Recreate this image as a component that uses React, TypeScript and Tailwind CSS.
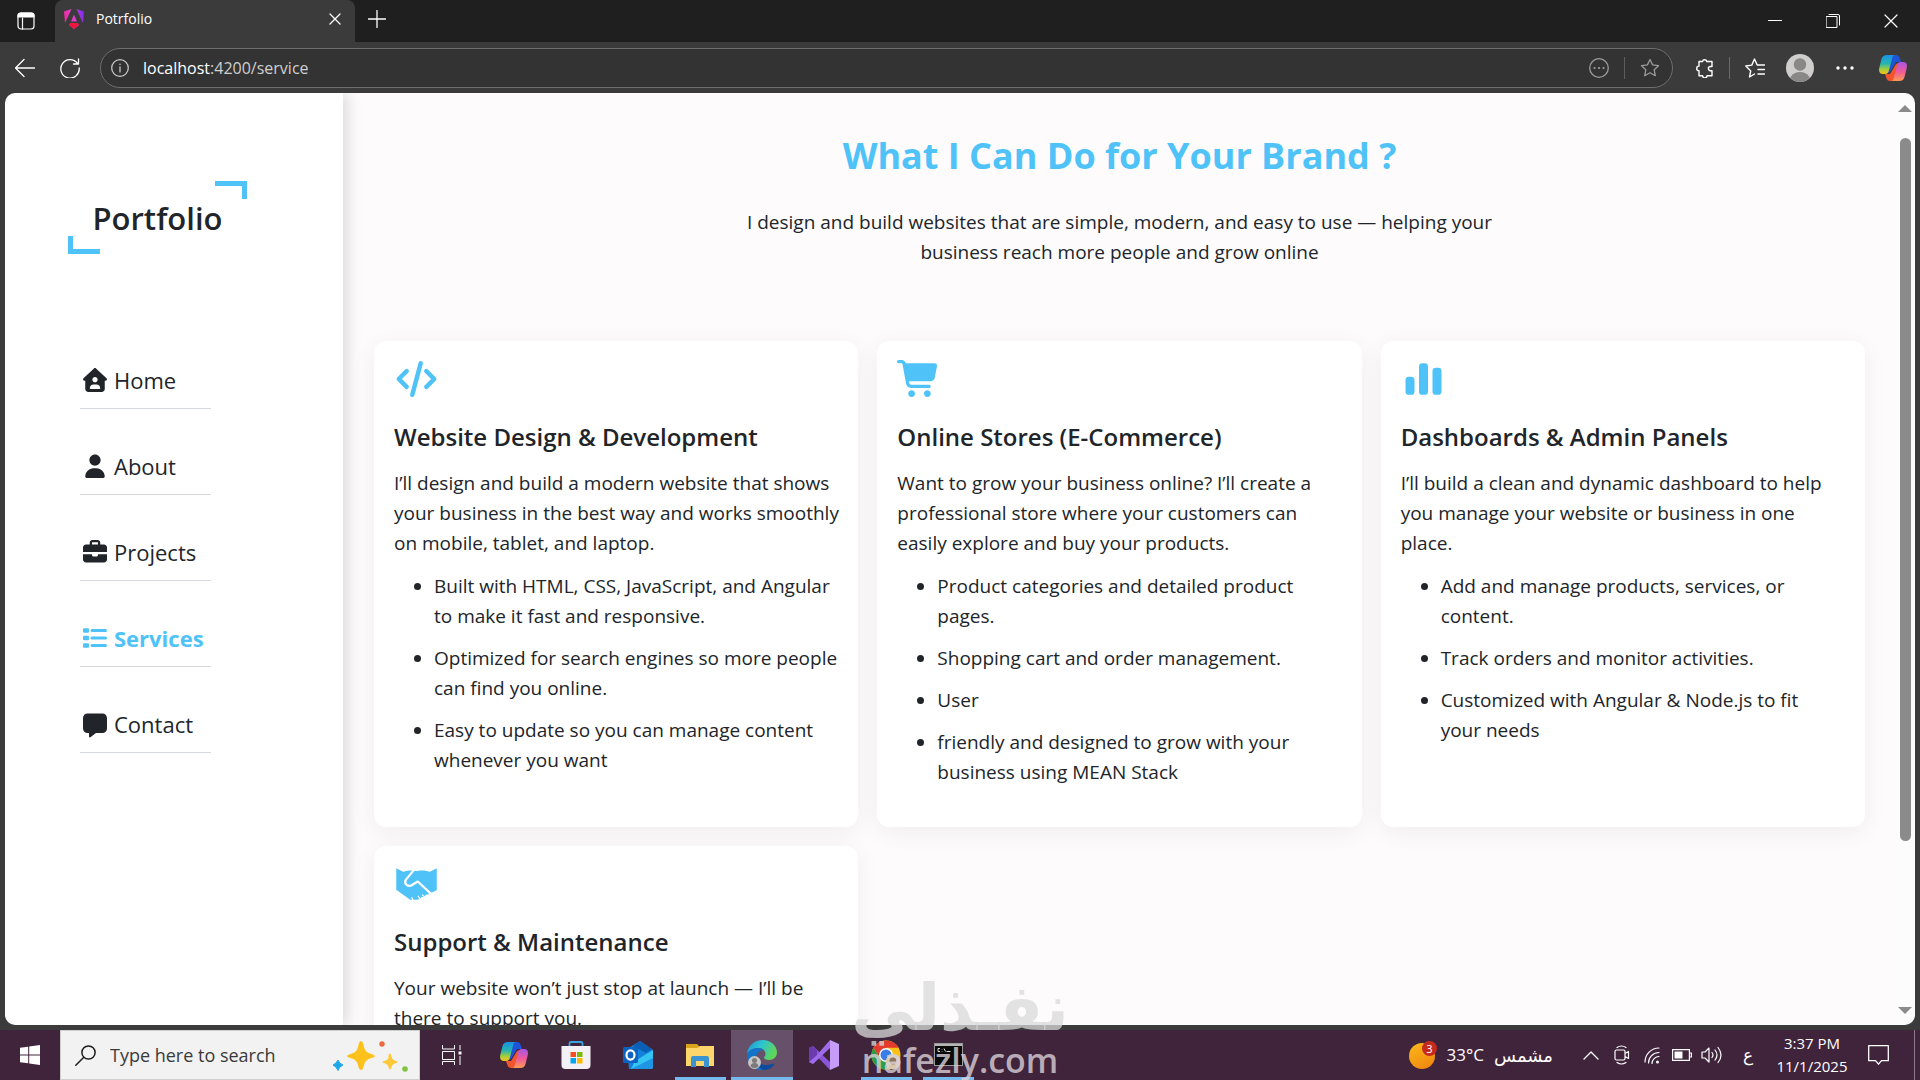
import React from 'react';

interface Service {
    title: string;
    description: string;
    items: string[];
    icon: React.ReactNode;
}

interface NavItem {
    label: string;
    path: string;
    active?: boolean;
}

const navItems: NavItem[] = [
    {
        label: 'Home',
        path: 'M341.8 72.6C329.5 61.2 310.5 61.2 298.3 72.6L74.3 280.6C64.7 289.6 61.5 303.5 66.3 315.7C71.1 327.9 82.8 336 96 336L112 336L112 512C112 547.3 140.7 576 176 576L464 576C499.3 576 528 547.3 528 512L528 336L544 336C557.2 336 569 327.9 573.8 315.7C578.6 303.5 575.4 289.5 565.8 280.6L341.8 72.6zM320 256C351 256 376 281 376 312C376 343 351 368 320 368C289 368 264 343 264 312C264 281 289 256 320 256zM208 496C208 451.8 243.8 416 288 416L352 416C396.2 416 432 451.8 432 496C432 504.8 424.8 512 416 512L224 512C215.2 512 208 504.8 208 496z',
    },
    {
        label: 'About',
        path: 'M320 312C386.3 312 440 258.3 440 192C440 125.7 386.3 72 320 72C253.7 72 200 125.7 200 192C200 258.3 253.7 312 320 312zM290.3 368C191.8 368 112 447.8 112 546.3C112 562.7 125.3 576 141.7 576L498.3 576C514.7 576 528 562.7 528 546.3C528 447.8 448.2 368 349.7 368L290.3 368z',
    },
    {
        label: 'Projects',
        path: 'M264 112L376 112C380.4 112 384 115.6 384 120L384 160L256 160L256 120C256 115.6 259.6 112 264 112zM208 120L208 160L128 160C92.7 160 64 188.7 64 224L64 320L576 320L576 224C576 188.7 547.3 160 512 160L432 160L432 120C432 89.1 406.9 64 376 64L264 64C233.1 64 208 89.1 208 120zM576 368L384 368L384 384C384 401.7 369.7 416 352 416L288 416C270.3 416 256 401.7 256 384L256 368L64 368L64 480C64 515.3 92.7 544 128 544L512 544C547.3 544 576 515.3 576 480L576 368z',
    },
    {
        label: 'Services',
        path: 'M88 112h80q24 0 24 24v48q0 24-24 24h-80q-24 0-24-24v-48q0-24 24-24zM256 128h288a32 32 0 0 1 0 64h-288a32 32 0 0 1 0-64zM256 288h288a32 32 0 0 1 0 64h-288a32 32 0 0 1 0-64zM256 448h288a32 32 0 0 1 0 64h-288a32 32 0 0 1 0-64zM88 272h80q24 0 24 24v48q0 24-24 24h-80q-24 0-24-24v-48q0-24 24-24zM88 432h80q24 0 24 24v48q0 24-24 24h-80q-24 0-24-24v-48q0-24 24-24z',
        active: true,
    },
    {
        label: 'Contact',
        path: 'M64 192C64 139 107 96 160 96L480 96C533 96 576 139 576 192L576 416C576 469 533 512 480 512L341 512L222 601C204 613 192 604 192 588L192 512L160 512C107 512 64 469 64 416z',
    },
];

const CardIcon: React.FC<{ children: React.ReactNode }> = ({ children }) => (
    <svg viewBox="0 64 640 512" className="h-9 w-[45px] overflow-visible" fill="#4fc3f7">
        {children}
    </svg>
);

const services: Service[] = [
    {
        title: 'Website Design & Development',
        description:
            'I’ll design and build a modern website that shows your business in the best way and works smoothly on mobile, tablet, and laptop.',
        items: [
            'Built with HTML, CSS, JavaScript, and Angular to make it fast and responsive.',
            'Optimized for search engines so more people can find you online.',
            'Easy to update so you can manage content whenever you want',
        ],
        icon: (
            <CardIcon>
                <path
                    d="M380 96L260 544M180 208L68 320L180 432M460 208L572 320L460 432"
                    fill="none"
                    stroke="#4fc3f7"
                    strokeWidth="64"
                    strokeLinecap="round"
                    strokeLinejoin="round"
                />
            </CardIcon>
        ),
    },
    {
        title: 'Online Stores (E-Commerce)',
        description:
            'Want to grow your business online? I’ll create a professional store where your customers can easily explore and buy your products.',
        items: [
            'Product categories and detailed product pages.',
            'Shopping cart and order management.',
            'User',
            'friendly and designed to grow with your business using MEAN Stack',
        ],
        icon: (
            <CardIcon>
                <path d="M24 48C10.7 48 0 58.7 0 72C0 85.3 10.7 96 24 96L69.3 96C73.2 96 76.5 98.8 77.2 102.6L129.3 388.9C135.5 423.1 165.3 448 200.1 448L456 448C469.3 448 480 437.3 480 424C480 410.7 469.3 400 456 400L200.1 400C188.5 400 178.6 391.7 176.5 380.3L171.4 352L475 352C505.8 352 532.2 330.1 537.9 299.8L568.9 133.9C572.6 114.2 557.5 96 537.4 96L124.7 96L124.3 94C119.5 67.4 96.3 48 69.2 48L24 48zM208 576C234.5 576 256 554.5 256 528C256 501.5 234.5 480 208 480C181.5 480 160 501.5 160 528C160 554.5 181.5 576 208 576zM432 576C458.5 576 480 554.5 480 528C480 501.5 458.5 480 432 480C405.5 480 384 501.5 384 528C384 554.5 405.5 576 432 576z" />
            </CardIcon>
        ),
    },
    {
        title: 'Dashboards & Admin Panels',
        description:
            'I’ll build a clean and dynamic dashboard to help you manage your website or business in one place.',
        items: [
            'Add and manage products, services, or content.',
            'Track orders and monitor activities.',
            'Customized with Angular & Node.js to fit your\u00a0needs',
        ],
        icon: (
            <CardIcon>
                <rect x="64" y="288" width="128" height="256" rx="48" />
                <rect x="256" y="96" width="128" height="448" rx="48" />
                <rect x="448" y="160" width="128" height="384" rx="48" />
            </CardIcon>
        ),
    },
    {
        title: 'Support & Maintenance',
        description: 'Your website won’t just stop at launch — I’ll be there to support you.',
        items: [],
        icon: (
            <CardIcon>
                <path d="M32 96L130 144L210 128L270 128L320 134L370 128L430 128L510 144L608 96V408L540 440L500 440L490 470L450 474L430 505L390 505L370 530L330 544L230 544L32 400Z" />
                <path
                    d="M290 112L170 258C135 315 195 362 250 338L338 285L530 465"
                    fill="none"
                    stroke="#fff"
                    strokeWidth="32"
                    strokeLinejoin="round"
                />
                <path d="M250 505L272 550M400 470L440 515M340 490L375 535" stroke="#fff" strokeWidth="16" />
            </CardIcon>
        ),
    },
];

const CopilotIcon: React.FC<{ id: string }> = ({ id }) => (
    <svg viewBox="0 0 28 26" className="h-[26px] w-7">
        <defs>
            <linearGradient id={`${id}-a`} x1="0" y1="0" x2="0" y2="1">
                <stop offset="0" stopColor="#1b8fe8" />
                <stop offset="0.45" stopColor="#25b5b0" />
                <stop offset="0.75" stopColor="#a4cf3a" />
                <stop offset="1" stopColor="#f7c21b" />
            </linearGradient>
            <linearGradient id={`${id}-b`} x1="0" y1="0" x2="0" y2="1">
                <stop offset="0" stopColor="#a855e8" />
                <stop offset="0.5" stopColor="#ee5a9c" />
                <stop offset="1" stopColor="#ff9a52" />
            </linearGradient>
        </defs>
        <path d="M8 0h9c2 0 3 1 4 4l1 3h-5l-6 10-5 2z" fill="#1e55d8" />
        <path d="M20 26h-9c-2 0-3-1-4-4l-1-3h5l6-10 5-2z" fill="#f0552e" />
        <path d="M8 0h8c-2 0-2.600 2-3 4l-3 11c-.6 2.500-1.500 4-4 4H4c-4 0-4.500-3-3.500-7l2-8C3.500 1 5 0 8 0z" fill={`url(#${id}-a)`} />
        <path d="M20 26h-8c2 0 2.600-2 3-4l3-11c.6-2.500 1.500-4 4-4h2c4 0 4.500 3 3.500 7l-2 8c-1 3-2.500 4-5.500 4z" fill={`url(#${id}-b)`} />
    </svg>
);

const lineIcon = {
    fill: 'none',
    stroke: 'currentColor',
    strokeLinecap: 'round' as const,
    strokeLinejoin: 'round' as const,
};

const TabStrip: React.FC = () => (
    <div className="flex h-[42px] bg-[#1f1f1f] text-white">
        <button aria-label="Tab actions" className="flex w-[55px] items-center justify-center pr-1">
            <svg viewBox="0 0 20 20" className="h-5 w-5" {...lineIcon} strokeWidth="1.200">
                <rect x="2" y="2" width="16" height="16" rx="3" />
                <path d="M2 4.500a2.500 2.500 0 0 1 2.500-2.500h11a2.500 2.500 0 0 1 2.500 2.500v1.500H2z" fill="currentColor" />
                <path d="M6.500 7v11" />
            </svg>
        </button>
        <div className="flex w-[300px] items-center rounded-t-lg bg-[#3b3b3b] pr-2 pb-1 pl-[9px]">
            <svg viewBox="0 0 20 20" className="mr-3 h-5 w-5">
                <defs>
                    <linearGradient id="ng" x1="0" y1="0.600" x2="1" y2="0.300">
                        <stop offset="0" stopColor="#f0269e" />
                        <stop offset="0.500" stopColor="#e040c8" />
                        <stop offset="1" stopColor="#7a2cf0" />
                    </linearGradient>
                </defs>
                <path d="M7.500 0L0 2.500 1 14 7.500 0zM12.500 0L20 2.500 19 14 12.500 0zM10 5.500l3 7H7zM6.500 14h7l1.500 2-5 4-5-4z" fill="url(#ng)" />
                <path d="M6.500 14h7l1.500 2-5 4-5-4z" fill="#f0153f" />
            </svg>
            <span className="flex-1 text-[14px] leading-5">Potrfolio</span>
            <button aria-label="Close tab" className="flex h-6 w-6 items-center justify-center">
                <svg viewBox="0 0 12 12" className="h-3 w-3" {...lineIcon} strokeWidth="1.300">
                    <path d="M1 1l10 10M11 1L1 11" />
                </svg>
            </button>
        </div>
        <button aria-label="New tab" className="flex w-11 items-center justify-center pb-1">
            <svg viewBox="0 0 18 18" className="h-[18px] w-[18px]" {...lineIcon} strokeWidth="1.300">
                <path d="M9 .5v17M.5 9h17" />
            </svg>
        </button>
        <div className="ml-auto flex">
            <button aria-label="Minimize" className="flex w-[58px] items-center justify-center">
                <svg viewBox="0 0 14 14" className="h-3.5 w-3.5" {...lineIcon}>
                    <path d="M.5 6.500h13" />
                </svg>
            </button>
            <button aria-label="Restore" className="flex w-[58px] items-center justify-center">
                <svg viewBox="0 0 14 14" className="h-3.5 w-3.5" {...lineIcon}>
                    <path d="M.5 2.500h10.500v11H.5zM3 .5h9a1.500 1.500 0 0 1 1.500 1.500v9" />
                </svg>
            </button>
            <button aria-label="Close" className="flex w-[58px] items-center justify-center">
                <svg viewBox="0 0 14 14" className="h-3.5 w-3.5" {...lineIcon} strokeWidth="1.200">
                    <path d="M1 1l12 12M13 1L1 13" />
                </svg>
            </button>
        </div>
    </div>
);

const starPath = 'M10 1.500l2.600 5.400 5.900.8-4.300 4.100 1.100 5.900-5.300-2.900-5.300 2.900 1.100-5.900L1.500 7.700l5.900-.8z';

const Toolbar: React.FC = () => (
    <div className="flex h-[51px] items-center bg-[#3b3b3b] pr-1 text-white">
        <button aria-label="Back" className="flex w-[50px] justify-center">
            <svg viewBox="0 0 20 20" className="h-5 w-5" {...lineIcon} strokeWidth="1.300">
                <path d="M19.500 10H.5M9 1.500L.5 10 9 18.500" />
            </svg>
        </button>
        <button aria-label="Refresh" className="flex w-10 justify-center">
            <svg viewBox="0 0 20 20" className="h-5 w-5" {...lineIcon} strokeWidth="1.300">
                <path d="M17.500 5.500A9.200 9.200 0 1 0 19.200 10M18.500 1v5h-5" />
            </svg>
        </button>
        <div className="ml-2.5 flex h-10 flex-1 items-center rounded-full border border-[#6e6e6e] bg-[#333] pr-3 pl-2.5 text-[#9a9a9a]">
            <svg viewBox="0 0 18 18" className="h-[18px] w-[18px]" {...lineIcon} stroke="#c8c8c8" strokeWidth="1.300">
                <circle cx="9" cy="9" r="8.300" />
                <path d="M9 8v5M9 5.200v.3" />
            </svg>
            <span className="ml-3.5 flex-1 text-[16px] leading-6 text-[#cfcfcf]">
                <span className="text-white">localhost</span>:4200/service
            </span>
            <svg viewBox="0 0 20 20" className="h-5 w-5" {...lineIcon} strokeWidth="1.300">
                <circle cx="10" cy="10" r="9.300" />
                <path d="M5.500 10h.1M10 10h.1M14.500 10h.1" strokeWidth="2.200" />
            </svg>
            <div className="mx-[15px] h-[22px] w-px bg-[#5c5c5c]" />
            <svg viewBox="0 0 20 20" className="h-5 w-5" {...lineIcon} strokeWidth="1.300">
                <path d={starPath} />
            </svg>
        </div>
        <button aria-label="Extensions" className="ml-1.5 flex w-[50px] justify-center">
            <svg viewBox="0 0 20 20" className="h-5 w-5" {...lineIcon} strokeWidth="1.400">
                <path d="M5 3.500h3.500a2.200 2.200 0 0 1 4.300 0H18v5h-1.500a2 2 0 0 0 0 4.200H18v5h-5a2.200 2.200 0 0 1-4.400 0H5v-5a2.200 2.200 0 0 1 0-4.600z" />
            </svg>
        </button>
        <div className="h-[22px] w-px bg-[#6a6a6a]" />
        <button aria-label="Favorites" className="flex w-[50px] justify-center">
            <svg viewBox="0 0 20 20" className="h-5 w-5" {...lineIcon} strokeWidth="1.400">
                <path d="M9.500 16l-5 3 1.200-6L.8 8l6-.9L9.500 1l2.700 6h7.300M13 11.500h6.500M13 16h6.500" />
            </svg>
        </button>
        <button aria-label="Profile" className="flex w-10 justify-center">
            <svg viewBox="0 0 28 28" className="h-7 w-7">
                <clipPath id="avatar">
                    <circle cx="14" cy="14" r="14" />
                </clipPath>
                <g clipPath="url(#avatar)">
                    <path d="M0 0h28v28H0z" fill="#d0cecc" />
                    <circle cx="14" cy="10.500" r="6.200" fill="#8a8886" />
                    <ellipse cx="14" cy="26" rx="10" ry="8" fill="#8a8886" />
                </g>
            </svg>
        </button>
        <button aria-label="Settings" className="flex w-[50px] justify-center">
            <svg viewBox="0 0 18 4" className="h-1 w-[18px]" fill="currentColor">
                <circle cx="2" cy="2" r="1.700" />
                <circle cx="9" cy="2" r="1.700" />
                <circle cx="16" cy="2" r="1.700" />
            </svg>
        </button>
        <button aria-label="Copilot" className="flex w-[46px] justify-center">
            <CopilotIcon id="tool" />
        </button>
    </div>
);

const Sidebar: React.FC = () => (
    <aside className="relative z-10 w-[338px] shrink-0 bg-white pt-[88px] pl-[63px] shadow-[4px_0_14px_rgba(0,0,0,0.14)]">
        <div className="relative flex h-[73px] w-[179px] items-center justify-center">
            <span className="absolute top-0 right-0 h-[18px] w-8 border-t-[5px] border-r-[5px] border-[#4fc3f7]" />
            <span className="absolute bottom-0 left-0 h-[18px] w-8 border-b-[5px] border-l-[5px] border-[#4fc3f7]" />
            <span className="text-[31px] leading-10 font-semibold">Portfolio</span>
        </div>
        <nav className="mt-[97px] ml-3 flex w-[131px] flex-col gap-7">
            {navItems.map((item) => (
                <a
                    key={item.label}
                    href="#"
                    className={`flex h-[58px] items-center gap-1 border-b border-[#d5d8dc] text-[22px] leading-8 ${
                        item.active ? 'font-bold text-[#4fc3f7]' : ''
                    }`}
                >
                    <svg viewBox="0 0 640 640" className="h-[30px] w-[30px]" fill="currentColor" fillRule="evenodd">
                        <path d={item.path} />
                    </svg>
                    {item.label}
                </a>
            ))}
        </nav>
    </aside>
);

const ServiceCard: React.FC<{ service: Service }> = ({ service }) => (
    <article className="rounded-xl bg-white py-5 pr-4 pl-5 shadow-[0_5px_25px_rgba(0,0,0,0.06)]">
        {service.icon}
        <h2 className="mt-[25px] text-[24px] leading-[30px] font-semibold">{service.title}</h2>
        <p className="mt-4">{service.description}</p>
        {service.items.length > 0 && (
            <ul className="mt-[13px] mb-5 flex list-disc flex-col gap-3 pl-10">
                {service.items.map((item) => (
                    <li key={item}>{item}</li>
                ))}
            </ul>
        )}
    </article>
);

const ServicesPage: React.FC = () => (
    <main className="min-w-0 flex-1 overflow-hidden bg-[#fdfbfc] pr-[30px] pl-[31px]">
        <header className="mx-auto max-w-[750px] pt-[39px] text-center">
            <h1 className="text-[36px] leading-[48px] font-bold text-[#4fc3f7]">What I Can Do for Your Brand ?</h1>
            <p className="mt-[27px]">
                I design and build websites that are simple, modern, and easy to use — helping your business reach more
                people and grow online
            </p>
        </header>
        <div className="mt-[74px] grid grid-cols-3 gap-[19px]">
            {services.map((service) => (
                <ServiceCard key={service.title} service={service} />
            ))}
        </div>
    </main>
);

const Scrollbar: React.FC = () => (
    <div className="flex w-5 shrink-0 flex-col items-center bg-[#fcfcfc] pt-3 pb-[11px]">
        <svg viewBox="0 0 14 7" className="h-[7px] w-3.5" fill="#8b8b8b">
            <path d="M7 0l7 7H0z" />
        </svg>
        <div className="mt-[26px] mb-[166px] w-[11px] flex-1 rounded-full bg-[#8b8b8b]" />
        <svg viewBox="0 0 14 7" className="h-[7px] w-3.5" fill="#8b8b8b">
            <path d="M7 7l7-7H0z" />
        </svg>
    </div>
);

interface TaskButtonProps {
    label: string;
    running?: boolean;
    active?: boolean;
    children: React.ReactNode;
}

const TaskButton: React.FC<TaskButtonProps> = ({ label, running, active, children }) => (
    <button
        aria-label={label}
        className={`flex w-[62px] flex-col items-center ${active ? 'bg-[#67506a]' : ''}`}
    >
        <span className="flex flex-1 items-center">{children}</span>
        {(running || active) && <span className={`-mt-[3px] h-[3px] bg-[#76b9ed] ${active ? 'w-full' : 'w-[51px]'}`} />}
    </button>
);

const Taskbar: React.FC = () => (
    <footer className="flex h-[50px] shrink-0 bg-[#40243b] text-white">
        <button aria-label="Start" className="flex w-[60px] items-center justify-center">
            <svg viewBox="0 0 20 20" className="h-5 w-5" fill="currentColor">
                <path d="M0 2.800l8.200-1.100v7.800H0zM9.200 1.500L20 0v9.500H9.200zM0 10.500h8.200v7.800L0 17.200zM9.200 10.500H20V20L9.200 18.500z" />
            </svg>
        </button>
        <label className="flex w-[360px] items-center border border-[#cfcfcf] bg-[#f2f2f2] pr-2 pl-3.5">
            <svg viewBox="0 0 21 21" className="h-[21px] w-[21px]" {...lineIcon} stroke="#1c1c1c" strokeWidth="1.500">
                <circle cx="13.500" cy="7.500" r="6.600" />
                <path d="M8.800 12.200L.8 20.200" />
            </svg>
            <input
                type="text"
                aria-label="Search"
                placeholder="Type here to search"
                className="ml-3.5 w-[210px] bg-transparent text-[18px] leading-6 outline-none placeholder:text-[#3a3a3a]"
            />
            <svg viewBox="0 0 80 34" className="ml-auto h-[34px] w-20">
                <path d="M30 3q2 0 3 6 1 5 6 6.500 5 1.500 5 2.500t-5 2.500q-5 1.500-6 6.500-1 5-3 5t-3-5q-1-5-6-6.500-5-1.500-5-2.500t5-2.500q5-1.500 6-6.500 1-6 3-6z" fill="#fcc21b" />
                <path d="M59 15.500q1 0 1.500 3t3 4q3 .5 3 1.500t-3 1.500q-2.500 1-3 3.500t-1.500 2.500-1.500-2.500-3-3.500q-3-.5-3-1.500t3-1.500 3-4 1.500-3z" fill="#fcc93a" />
                <path d="M7 22q1 3.500 5 5-4 1.500-5 5.500-1.500-4-5-5.500 3.500-1.500 5-5z" fill="#1ea7e8" stroke="#1ea7e8" />
                <circle cx="51" cy="6" r="2.700" fill="#ea6a3c" />
                <circle cx="74" cy="31" r="2.800" fill="#82c341" />
            </svg>
        </label>
        <div className="ml-px flex">
            <TaskButton label="Task View">
                <svg viewBox="0 0 20 20" className="h-5 w-5" {...lineIcon} strokeLinecap="butt">
                    <path d="M.5 0v4h12V0M.5 6.500h12v8H.5zM.5 20v-3.500h12V20M18 0v5M18 11v9" />
                    <path d="M16.500 8h3" strokeWidth="3" />
                </svg>
            </TaskButton>
            <TaskButton label="Copilot">
                <CopilotIcon id="task" />
            </TaskButton>
            <TaskButton label="Microsoft Store">
                <svg viewBox="0 0 30 30" className="h-[30px] w-[30px]">
                    <path d="M8.500 7V3.500a1.500 1.500 0 0 1 1.500-1.500h10a1.500 1.500 0 0 1 1.500 1.500V7" fill="none" stroke="#37a5dd" strokeWidth="1.800" />
                    <path d="M.5 6h29v19a4 4 0 0 1-4 4h-21a4 4 0 0 1-4-4z" fill="#f3f1f5" />
                    <path d="M9.500 12H15v5H9.500z" fill="#f25022" />
                    <path d="M16 12h5.500v5H16z" fill="#7fba00" />
                    <path d="M9.500 18H15v5.500H9.500z" fill="#00a4ef" />
                    <path d="M16 18h5.500v5.500H16z" fill="#ffb900" />
                </svg>
            </TaskButton>
            <TaskButton label="Outlook">
                <svg viewBox="0 0 30 28" className="h-7 w-[30px]">
                    <path d="M4 8l13-8 13 9v17a2 2 0 0 1-2 2H6z" fill="#1480d8" />
                    <path d="M10 5l13 7 6-4-12-8z" fill="#0a5fb5" />
                    <path d="M12 20l18-11v17l-2 2H8z" fill="#35c5f2" />
                    <path d="M8 28l22-11v9a2 2 0 0 1-2 2z" fill="#1e96e4" />
                    <rect y="6" width="15" height="16" rx="1.500" fill="#0b63c4" />
                    <ellipse cx="7.500" cy="14" rx="4" ry="4.600" fill="none" stroke="#fff" strokeWidth="2.200" />
                </svg>
            </TaskButton>
            <TaskButton label="File Explorer" running>
                <svg viewBox="0 0 28 24" className="h-6 w-7">
                    <path d="M0 1h11l3 3h-2v6H0z" fill="#dba21c" />
                    <path d="M0 5h11l3-2h14v20H0z" fill="#fcd66a" />
                    <path d="M5 24V15a2 2 0 0 1 2-2h14a2 2 0 0 1 2 2v9h-5v-6h-8v6z" fill="#3a94d0" />
                </svg>
            </TaskButton>
            <TaskButton label="Microsoft Edge" active>
                <svg viewBox="0 0 30 30" className="h-[30px] w-[30px]">
                    <defs>
                        <linearGradient id="edge-top" x1="0" y1="0" x2="1" y2="0.400">
                            <stop offset="0" stopColor="#1e90d8" />
                            <stop offset="0.500" stopColor="#2ec4d0" />
                            <stop offset="1" stopColor="#5ed65a" />
                        </linearGradient>
                    </defs>
                    <path d="M0 14C1 5 8 0 15.500 0 24 0 30 6 30 12.500c0 4.500-3.500 7.500-8 7.500-3 0-5-1-5-2.200 0-1 1.500-1.500 1.500-4 0-3-3-5.800-7-5.800-5 0-9.500 2.500-11.500 6z" fill="url(#edge-top)" />
                    <path d="M0 14c2-4 6.500-6 11-6 2.500 0 4.500.7 5.800 2-4.300 0-7.800 3.500-7.800 8 0 6 5 10.500 11 10.500-1.500 1-3.500 1.500-5 1.500C6 30 0 23 0 14z" fill="#1273c8" />
                    <path d="M10 16c-.5 6 5 9.500 10 9 3-.3 5.500-1.500 6.500-1.500.8 0 1 .8.500 1.500-2 3-6 5-11 5-5-2-8-8-6-14z" fill="#0d4c9c" />
                    <circle cx="7.500" cy="22.500" r="6.500" fill="#c9c7c5" />
                    <circle cx="7.500" cy="20.500" r="2.500" fill="#7d7b79" />
                    <path d="M3.500 26.500a4 3.500 0 0 1 8 0 6.500 6.500 0 0 1-8 0z" fill="#7d7b79" />
                </svg>
            </TaskButton>
            <TaskButton label="Visual Studio">
                <svg viewBox="0 0 30 30" className="h-[30px] w-[30px]">
                    <path d="M0 8l4-2 18 17-1 7z" fill="#8a55d6" />
                    <path d="M0 8l4-2 4 4v10l-4 4-4-2z" fill="#6c3bb0" />
                    <path d="M21 0v8L4 24l-4-2 7-6z" fill="#9f6be8" />
                    <path d="M21 0l9 4v22l-9 4z" fill="#c79bf8" />
                </svg>
            </TaskButton>
            <TaskButton label="Google Chrome" running>
                <svg viewBox="0 0 30 30" className="h-[30px] w-[30px]">
                    <circle cx="15" cy="15" r="14.500" fill="#fbc116" />
                    <path d="M2.400 7.800A14.500 14.500 0 0 1 27.600 7.800H15L9 18.500z" fill="#e33b2e" />
                    <path d="M2.400 7.800A14.500 14.500 0 0 0 15 29.500l6-11H9z" fill="#2a9d4a" />
                    <circle cx="15" cy="15" r="7" fill="#fff" />
                    <circle cx="15" cy="15" r="5.500" fill="#3a7de8" />
                    <circle cx="22" cy="22" r="7.500" fill="#d9c9ac" />
                    <circle cx="22" cy="21" r="3.500" fill="#8f7459" />
                </svg>
            </TaskButton>
            <TaskButton label="Command Prompt" running>
                <svg viewBox="0 0 29 24" className="h-6 w-[29px]">
                    <rect x=".5" y=".5" width="28" height="22" fill="#0a0a0a" stroke="#9a9a9a" />
                    <path d="M1 1h27v2H1z" fill="#b5b5b5" />
                    <path d="M6 5.500H4v3h2M8 6v.5M8 8v.5M10 5.500l1.500 3M12.500 8.500h4" stroke="#ddd" fill="none" />
                </svg>
            </TaskButton>
        </div>
        <div className="ml-auto flex items-center">
            <svg viewBox="0 0 28 28" className="h-7 w-7">
                <defs>
                    <linearGradient id="sun" x1="0" y1="0" x2="0.600" y2="1">
                        <stop offset="0" stopColor="#fbb91a" />
                        <stop offset="1" stopColor="#f08a10" />
                    </linearGradient>
                </defs>
                <circle cx="13" cy="15" r="13" fill="url(#sun)" />
                <circle cx="20.500" cy="7.500" r="7.500" fill="#c42b1c" />
                <text x="20.500" y="11.500" fontSize="11" fill="#fff" textAnchor="middle">
                    3
                </text>
            </svg>
            <span className="ml-2.5 text-[17px]">33°C</span>
            <span dir="rtl" className="ml-3 w-[57px] text-[18px]">
                مشمس
            </span>
            <svg viewBox="0 0 16 9" className="ml-[30px] h-[9px] w-4" {...lineIcon} strokeWidth="1.300">
                <path d="M1 8l7-7 7 7" />
            </svg>
            <svg viewBox="0 0 16 20" className="ml-[15px] h-5 w-4" {...lineIcon} strokeWidth="1.200">
                <path d="M1 6.500q0-1.500 1.500-1.500h7q1.500 0 1.500 1.500v7q0 1.500-1.500 1.500h-7Q1 15 1 13.500zM11 8.500l3.500-2v7l-3.500-2M3 2.500q4.500-3 9 0M3 17.500q4.500 3 9 0" />
            </svg>
            <svg viewBox="0 0 16 17" className="ml-3.5 h-[17px] w-4" {...lineIcon} strokeWidth="1.200">
                <path d="M1 15A14 14 0 0 1 15 1M4.500 16A10.500 10.500 0 0 1 15 5.500M8 16.500A7 7 0 0 1 15 9.500" />
                <circle cx="13.500" cy="15" r="1.500" fill="currentColor" stroke="none" />
            </svg>
            <svg viewBox="0 0 20 12" className="ml-3 h-3 w-5">
                <path d="M.6.600h16.800v10.800H.600zM18 4h1.400v4H18" fill="none" stroke="#fff" strokeWidth="1.200" />
                <path d="M2.500 2.500h8v7h-8z" fill="#fff" />
            </svg>
            <svg viewBox="0 0 21 18" className="ml-[9px] h-[18px] w-[21px]" {...lineIcon} strokeWidth="1.200">
                <path d="M1 6v6h3l4 4V2L4 6zM11 6.500q2 2.500 0 5M14 4q4 5 0 10M17 1.500q6 7.500 0 15" />
            </svg>
            <span className="ml-[18px] w-4 text-center text-[17px]">ع</span>
            <div className="ml-[18px] flex w-[76px] flex-col items-center text-[15px] leading-[23px]">
                <span>3:37 PM</span>
                <span>11/1/2025</span>
            </div>
            <svg viewBox="0 0 21 20" className="ml-[18px] h-5 w-[21px]" {...lineIcon} strokeWidth="1.300">
                <path d="M.7.700h19.600v15h-6.800l-3 3.500-3-3.500H.7z" />
            </svg>
            <div className="mr-[5px] ml-[25px] h-[50px] w-px bg-[#8d7b8a]" />
        </div>
    </footer>
);

// Semi-transparent brand mark floating over the bottom of the window
const Watermark: React.FC = () => (
    <div className="pointer-events-none absolute bottom-0 left-1/2 z-20 flex -translate-x-1/2 flex-col items-center">
        <span dir="rtl" className="text-[64px] leading-[64px] font-bold text-[#d9d9d9]/75 [font-family:'DejaVu_Sans',sans-serif]">
            نفـذلي
        </span>
        <span className="text-[34px] leading-10 font-semibold text-[#dcd3da]/80">nafezly.com</span>
    </div>
);

const App: React.FC = () => {
    return (
        <div className="relative flex h-screen flex-col overflow-hidden bg-[#3b3b3b] text-[19px] leading-[30px] text-[#212529] [font-family:'Open_Sans','Noto_Sans','DejaVu_Sans',sans-serif]">
            <TabStrip />
            <Toolbar />
            <div className="mx-[5px] mb-[5px] flex min-h-0 flex-1 overflow-hidden rounded-[10px]">
                <Sidebar />
                <ServicesPage />
                <Scrollbar />
            </div>
            <Taskbar />
            <Watermark />
        </div>
    );
};

export default App;
